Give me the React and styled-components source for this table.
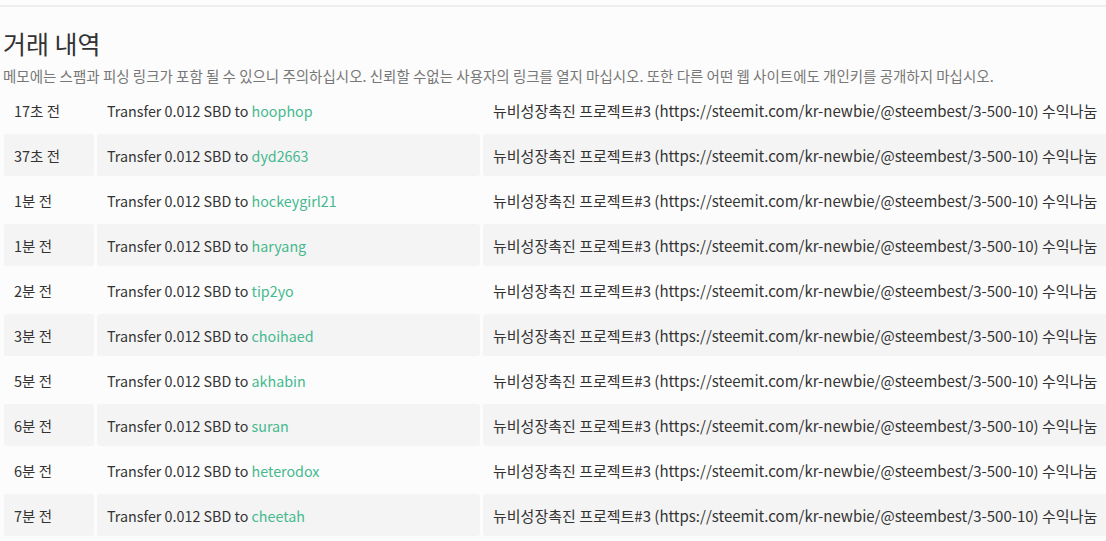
import React from "react";
import styled, { createGlobalStyle } from "styled-components";

const GlobalStyle = createGlobalStyle`
  html, body {
    margin: 0;
    padding: 0;
    background: #fcfcfc;
    overflow: hidden;
  }
  body {
    font-family: "Noto Sans CJK KR", "Noto Sans", sans-serif;
    color: #333;
  }
`;

const history = [
  ["17초 전", "hoophop"],
  ["37초 전", "dyd2663"],
  ["1분 전", "hockeygirl21"],
  ["1분 전", "haryang"],
  ["2분 전", "tip2yo"],
  ["3분 전", "choihaed"],
  ["5분 전", "akhabin"],
  ["6분 전", "suran"],
  ["6분 전", "heterodox"],
  ["7분 전", "cheetah"],
];

const memo =
  "뉴비성장촉진 프로젝트#3 (https://steemit.com/kr-newbie/@steembest/3-500-10) 수익나눔";

function App() {
  return (
    <>
      <GlobalStyle />
      <Page>
        <TopRule />
        <Section>
          <Title>거래 내역</Title>
          <Warning>
            메모에는 스팸과 피싱 링크가 포함 될 수 있으니 주의하십시오. 신뢰할 수없는 사용자의 링크를 열지 마십시오. 또한 다른 어떤 웹 사이트에도 개인키를 공개하지 마십시오.
          </Warning>
          <Table>
            <tbody>
              {history.map(([time, user], i) => (
                <Row key={i} $striped={i % 2 === 1}>
                  <TimeCell>{time}</TimeCell>
                  <OpCell>
                    Transfer 0.012 SBD to <UserLink href="#">{user}</UserLink>
                  </OpCell>
                  <MemoCell>{memo}</MemoCell>
                </Row>
              ))}
            </tbody>
          </Table>
        </Section>
      </Page>
    </>
  );
}

export default App;

const Page = styled.div`
  width: 1106px;
  height: 541px;
  overflow: hidden;
  padding-top: 5px;
`;

const TopRule = styled.div`
  height: 2px;
  background: #eeeeee;
`;

const Section = styled.div`
  padding: 0 0 0 1px;
`;

const Title = styled.h3`
  margin: 19px 0 0 2px;
  font-size: 25px;
  font-weight: 400;
  line-height: 34px;
  color: #333;
`;

const Warning = styled.p`
  margin: 6px 0 0 2px;
  font-size: 14.5px;
  line-height: 20px;
  color: #777;
  white-space: nowrap;
`;

const Table = styled.table`
  width: 1130px;
  border-collapse: separate;
  border-spacing: 3px 3px;
  margin-top: 0;
  font-size: 15px;
`;

const Row = styled.tr`
  td {
    background: ${(p) => (p.$striped ? "#f4f4f4" : "transparent")};
  }
`;

const Cell = styled.td`
  height: 42px;
  padding: 0 10px;
  border-radius: 3px;
  white-space: nowrap;
  vertical-align: middle;
  color: #333;
`;

const TimeCell = styled(Cell)`
  width: 70px;
  font-size: 14.5px;
`;

const OpCell = styled(Cell)`
  width: 363px;
  font-size: 14.3px;
`;

const MemoCell = styled(Cell)``;

const UserLink = styled.a`
  color: #44b98e;
  text-decoration: none;
`;
